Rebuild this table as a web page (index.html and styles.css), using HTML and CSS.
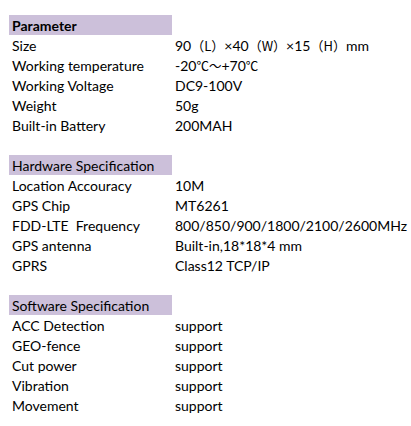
FILE: index.html
```html
<!DOCTYPE html>
<html>
<head>
<meta charset="utf-8">
<link rel="stylesheet" href="styles.css">
</head>
<body>
<div class="sheet">
  <div class="section">
    <div class="head bold">Parameter</div>
    <div class="row"><span class="k">Size</span><span class="v">90<span class="cjk">（L）</span>×40<span class="cjk">（W）</span>×15<span class="cjk">（H）</span>mm</span></div>
    <div class="row"><span class="k">Working temperature</span><span class="v">-20<span class="cjk-s">℃～</span>+70<span class="cjk-s">℃</span></span></div>
    <div class="row"><span class="k">Working Voltage</span><span class="v">DC9-100V</span></div>
    <div class="row"><span class="k">Weight</span><span class="v">50g</span></div>
    <div class="row"><span class="k">Built-in Battery</span><span class="v">200MAH</span></div>
  </div>
  <div class="section">
    <div class="head">Hardware Specification</div>
    <div class="row"><span class="k">Location Accouracy</span><span class="v">10M</span></div>
    <div class="row"><span class="k">GPS Chip</span><span class="v">MT6261</span></div>
    <div class="row"><span class="k">FDD-LTE&nbsp; Frequency</span><span class="v">800/850/900/1800/2100/2600MHz</span></div>
    <div class="row"><span class="k">GPS antenna</span><span class="v">Built-in,18*18*4 mm</span></div>
    <div class="row"><span class="k">GPRS</span><span class="v">Class12 TCP/IP</span></div>
  </div>
  <div class="section">
    <div class="head">Software Specification</div>
    <div class="row"><span class="k">ACC Detection</span><span class="v">support</span></div>
    <div class="row"><span class="k">GEO-fence</span><span class="v">support</span></div>
    <div class="row"><span class="k">Cut power</span><span class="v">support</span></div>
    <div class="row"><span class="k">Vibration</span><span class="v">support</span></div>
    <div class="row"><span class="k">Movement</span><span class="v">support</span></div>
  </div>
</div>
</body>
</html>
```
FILE: styles.css
```css
html, body {
  margin: 0;
  padding: 0;
  background: #ffffff;
}
.sheet {
  padding: 15px 0 0 9px;
  display: flex;
  flex-direction: column;
  gap: 20px;
  font-family: "Lato", "Noto Sans CJK SC", sans-serif;
  font-size: 14px;
  color: #000000;
}
.section {
  display: flex;
  flex-direction: column;
}
.head {
  box-sizing: border-box;
  width: 163px;
  height: 20px;
  line-height: 20px;
  padding: 1px 0 0 3px;
  background: #ccc0da;
}
.bold {
  font-weight: bold;
}
.row {
  box-sizing: border-box;
  display: grid;
  grid-template-columns: 163px auto;
  height: 20px;
  line-height: 20px;
  padding-top: 1px;
}
.k {
  padding-left: 3px;
  white-space: pre;
}
.v {
  padding-left: 3px;
  white-space: nowrap;
}
.cjk {
  font-family: "Noto Sans CJK SC", sans-serif;
  font-size: 13px;
}
.cjk-s {
  font-family: "Noto Sans CJK SC", sans-serif;
  font-size: 12.5px;
}
```
